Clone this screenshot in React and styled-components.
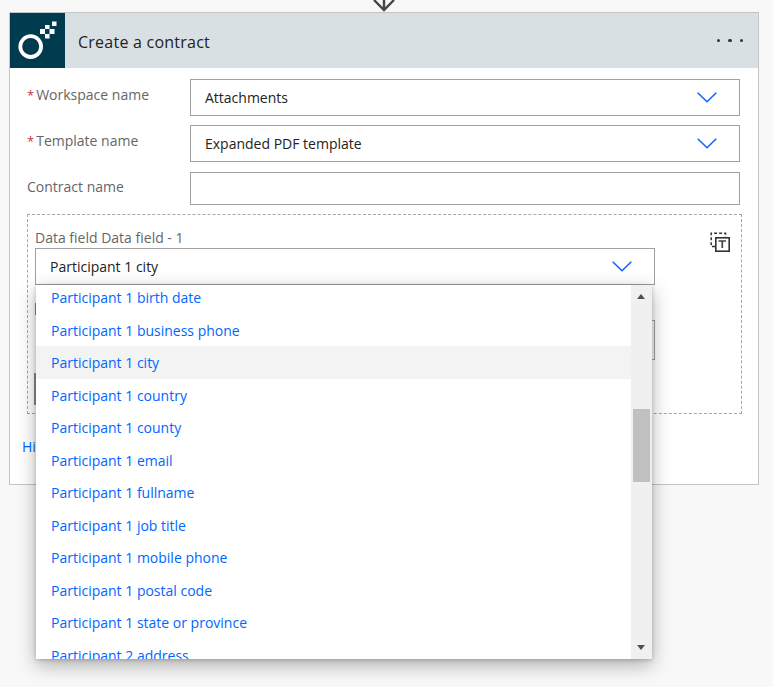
import styled, { createGlobalStyle } from "styled-components";

const participantFields = [
  "Participant 1 birth date",
  "Participant 1 business phone",
  "Participant 1 city",
  "Participant 1 country",
  "Participant 1 county",
  "Participant 1 email",
  "Participant 1 fullname",
  "Participant 1 job title",
  "Participant 1 mobile phone",
  "Participant 1 postal code",
  "Participant 1 state or province",
  "Participant 2 address",
];

const GlobalStyle = createGlobalStyle`
  html, body {
    margin: 0;
    background: #f8f8f8;
  }
  body {
    font-family: "Open Sans", "Liberation Sans", sans-serif;
    font-size: 14px;
    overflow: hidden;
  }
`;

const Page = styled.div`
  width: 773px;
  height: 687px;
  box-sizing: border-box;
  padding-left: 9px;
  overflow: hidden;
`;

const Connector = styled.div`
  width: 750px;
  height: 12px;
  display: flex;
  justify-content: center;
  svg {
    display: block;
  }
`;

const Card = styled.section`
  width: 750px;
  height: 473px;
  box-sizing: border-box;
  border: 1px solid #c4c4c4;
  background: #fff;
`;

const Header = styled.header`
  height: 55px;
  display: flex;
  align-items: center;
  background: #d9e0e4;
`;

const LogoBox = styled.div`
  width: 55px;
  height: 55px;
  background: #003b50;
  svg {
    display: block;
  }
`;

const Title = styled.h1`
  flex: 1;
  margin: 2px 0 0 13px;
  font-size: 16px;
  font-weight: 400;
  letter-spacing: 0.24px;
  color: #222;
`;

const Dots = styled.div`
  display: flex;
  gap: 8px;
  margin-right: 15px;
  span {
    width: 3.5px;
    height: 3.5px;
    border-radius: 50%;
    background: #333;
  }
`;

const Body = styled.div`
  padding: 11px 18px 0 17px;
`;

const Row = styled.div`
  display: flex;
  margin-bottom: ${({ $gap }) => $gap ?? 9}px;
`;

const Label = styled.label`
  width: 163px;
  padding-top: ${({ $top }) => $top ?? 6}px;
  font-size: 14px;
  line-height: 20px;
  color: #666;
  em {
    font-style: normal;
    font-size: 13px;
    color: #c4314b;
    margin-right: 2px;
  }
`;

const Select = styled.div`
  flex: ${({ $width }) => ($width ? "none" : 1)};
  width: ${({ $width }) => ($width ? `${$width}px` : "auto")};
  height: ${({ $height }) => $height ?? 37}px;
  box-sizing: border-box;
  display: flex;
  align-items: center;
  justify-content: space-between;
  padding: 0 22px 0 14px;
  border: 1px solid #a0a0a0;
  background: #fff;
  color: #222;
  font-size: 14px;
`;

const DashedGroup = styled.div`
  position: relative;
  width: 715px;
  height: 200px;
  box-sizing: border-box;
  border: 1px dashed #a6a6a6;
  padding: 13px 0 0 7px;
`;

const FieldLabel = styled.div`
  font-size: 14px;
  line-height: 20px;
  color: #666;
`;

const FieldWrap = styled.div`
  position: relative;
  width: 620px;
`;

const HiddenLink = styled.div`
  width: 60px;
  height: 12px;
  margin: 18px 0 5px;
  box-sizing: border-box;
  border-left: 2px solid #4a90f0;
`;

const HiddenInput = styled.div`
  width: 619px;
  height: 40px;
  margin-left: 1px;
  box-sizing: border-box;
  border: 1px solid #a0a0a0;
`;

const HiddenInputLow = styled.div`
  width: 300px;
  height: 32px;
  margin: 13px 0 0 -1px;
  box-sizing: border-box;
  border: 1px solid #a0a0a0;
  border-left: 2px solid #8a8a8a;
`;

const RemoveIcon = styled.div`
  position: absolute;
  top: 17px;
  right: 11px;
  width: 20px;
  height: 20px;
`;

const Dropdown = styled.div`
  position: absolute;
  top: 37px;
  left: 1px;
  width: 616px;
  height: 374px;
  display: flex;
  background: #fff;
  box-shadow: 0 6px 18px rgba(0, 0, 0, 0.3), 0 1px 4px rgba(0, 0, 0, 0.2);
  z-index: 2;
`;

const OptionList = styled.ul`
  flex: 1;
  list-style: none;
  margin: 0;
  padding: 0;
  overflow: hidden;
`;

const Option = styled.li`
  height: 32.5px;
  padding-left: 15px;
  display: flex;
  align-items: center;
  box-sizing: border-box;
  font-size: 14px;
  color: #0066ff;
  background: ${({ $active }) => ($active ? "#f3f3f3" : "transparent")};
  &:first-child {
    margin-top: -3.6px;
  }
`;

const Scrollbar = styled.div`
  position: relative;
  width: 21px;
  background: #f0f0f0;
`;

const Thumb = styled.div`
  position: absolute;
  top: 124px;
  left: 2px;
  width: 17px;
  height: 73px;
  background: #c0c0c0;
`;

const ScrollArrow = styled.div`
  position: absolute;
  left: 6px;
  ${({ $down }) => ($down ? "bottom: 9px;" : "top: 9px;")}
  width: 0;
  height: 0;
  border-left: 4.5px solid transparent;
  border-right: 4.5px solid transparent;
  ${({ $down }) =>
    $down ? "border-top: 5px solid #505050;" : "border-bottom: 5px solid #505050;"}
`;

const HideLink = styled.a`
  display: block;
  margin: 23px 0 0 -5px;
  font-size: 14px;
  line-height: 20px;
  color: #0066ff;
`;

function Chevron() {
  return (
    <svg width="20" height="11" viewBox="0 0 20 11" fill="none">
      <path d="M0.7 0.7 L10 9.8 L19.3 0.7" stroke="#0f62fe" strokeWidth="1.5" />
    </svg>
  );
}

function Logo() {
  return (
    <svg width="55" height="55" viewBox="0 0 55 55">
      <circle cx="20.7" cy="33.6" r="10.4" fill="none" stroke="#fff" strokeWidth="3.8" />
      <g fill="#fff">
        <rect x="30" y="16" width="5" height="5" />
        <rect x="35" y="12" width="4.5" height="4" />
        <rect x="35" y="21" width="4.5" height="4.5" />
        <rect x="39.5" y="16" width="5" height="5" />
        <rect x="42" y="8.5" width="4.5" height="4.5" />
      </g>
    </svg>
  );
}

function TextBoxIcon() {
  return (
    <svg width="20" height="20" viewBox="0 0 20 20" fill="none">
      <path
        d="M5 14.5H1.2V1.2H15.5V5"
        stroke="#333"
        strokeWidth="1.5"
        strokeDasharray="3 2"
      />
      <rect x="5.8" y="5.8" width="13.4" height="13.4" stroke="#333" strokeWidth="1.6" fill="#fff" />
      <path d="M8.5 9h7.5M12.3 9v7" stroke="#444" strokeWidth="1.7" />
    </svg>
  );
}

export default function App() {
  return (
    <Page>
      <GlobalStyle />
      <Connector>
        <svg width="26" height="12" viewBox="0 0 26 12" fill="none">
          <path d="M13 -4V10M3 0l10 10L23 0" stroke="#444" strokeWidth="2.4" />
        </svg>
      </Connector>
      <Card>
        <Header>
          <LogoBox>
            <Logo />
          </LogoBox>
          <Title>Create a contract</Title>
          <Dots>
            <span />
            <span />
            <span />
          </Dots>
        </Header>
        <Body>
          <Row>
            <Label>
              <em>*</em>Workspace name
            </Label>
            <Select>
              Attachments
              <Chevron />
            </Select>
          </Row>
          <Row $gap={10}>
            <Label>
              <em>*</em>Template name
            </Label>
            <Select>
              Expanded PDF template
              <Chevron />
            </Select>
          </Row>
          <Row $gap={9}>
            <Label $top={5}>Contract name</Label>
            <Select $height={33} />
          </Row>
          <DashedGroup>
            <FieldLabel>Data field Data field - 1</FieldLabel>
            <FieldWrap>
              <Select $width={620}>
                Participant 1 city
                <Chevron />
              </Select>
              <Dropdown>
                <OptionList>
                  {participantFields.map((name) => (
                    <Option key={name} $active={name === "Participant 1 city"}>
                      {name}
                    </Option>
                  ))}
                </OptionList>
                <Scrollbar>
                  <ScrollArrow />
                  <Thumb />
                  <ScrollArrow $down />
                </Scrollbar>
              </Dropdown>
            </FieldWrap>
            <HiddenLink />
            <HiddenInput />
            <HiddenInputLow />
            <RemoveIcon>
              <TextBoxIcon />
            </RemoveIcon>
          </DashedGroup>
          <HideLink>Hide advanced options</HideLink>
        </Body>
      </Card>
    </Page>
  );
}
